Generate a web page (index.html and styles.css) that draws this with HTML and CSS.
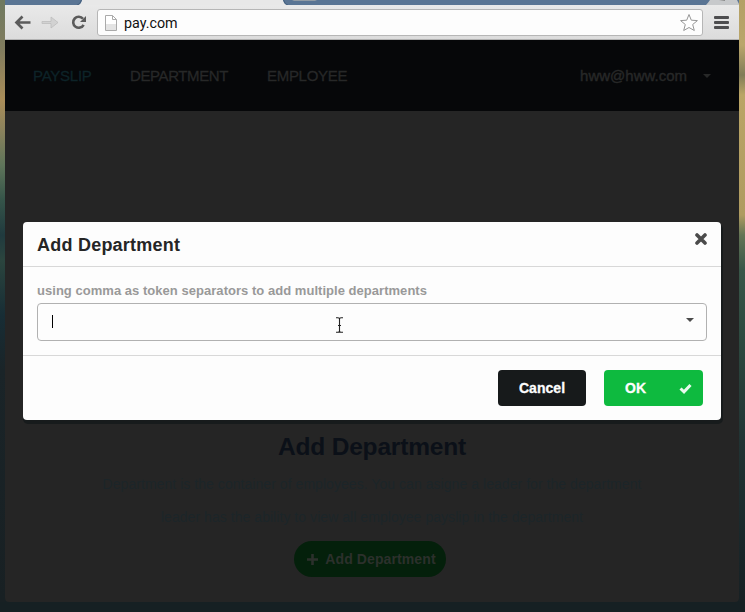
FILE: index.html
```html
<!DOCTYPE html>
<html lang="en">
<head>
<meta charset="utf-8">
<title>pay.com</title>
<link rel="stylesheet" href="styles.css">
</head>
<body>
<div class="window">
  <div class="tabs">
    <svg width="734" height="5" viewBox="0 0 734 5"><path d="M0 0H77Q76 5 72 5H0Z" fill="#5a7594"/><path d="M278 0Q279 5 283 5H734V0Z" fill="#5a7594"/><path d="M76.500 0Q75 5 72 5M278.500 0Q280 5 283 5" fill="none" stroke="#435f7e"/><path d="M287 0H312L310 1H289Z" fill="#919ba4"/><path d="M701 5C703 3 704 1 705 0H732L734 4V5Z" fill="#c7c9cb"/><path d="M714 0H720V1Z" fill="#888"/></svg>
  </div>
  <div class="toolbar">
    <svg class="nav-icons" width="92" height="34" viewBox="0 0 92 34">
      <path d="M11 17.500H25.500M17.500 11.500L11.500 17.500L17.500 23.500" fill="none" stroke="#5b5b5b" stroke-width="2.700"/>
      <path d="M37 16.500H46V12L53 17.500L46 23V18.500H37Z" fill="#d2d2d2" stroke="#bdbdbd" stroke-width=".8"/>
      <path d="M78 13.800A5.500 5.500 0 1 0 78.600 19.800" fill="none" stroke="#5b5b5b" stroke-width="2.600"/><path d="M81 11V17H75Z" fill="#5b5b5b"/>
    </svg>
    <div class="address">
      <svg width="12" height="16" viewBox="0 0 12 16"><path d="M.5.500H7.500L11.500 4.500V15.500H.5Z" fill="#fff" stroke="#aaa"/><path d="M1 9H11V15H1Z" fill="#e4e4e4"/><path d="M7.500.500V4.500H11.500" fill="none" stroke="#aaa"/></svg>
      <span class="url">pay.com</span>
      <svg width="20" height="20" viewBox="0 0 20 20"><path d="M10 1.500L12.300 7.200L18.400 7.600L13.700 11.500L15.300 17.500L10 14.500L4.700 17.500L6.300 11.500L1.600 7.600L7.700 7.200Z" fill="#fff" stroke="#969696" stroke-linejoin="round"/></svg>
    </div>
    <div class="burger"><i></i><i></i><i></i></div>
  </div>
  <div class="page">
    <nav class="menu">
      <span class="item active">PAYSLIP</span>
      <span class="item department">DEPARTMENT</span>
      <span class="item employee">EMPLOYEE</span>
      <span class="account">hww@hww.com</span>
      <i class="caret"></i>
    </nav>
    <section class="intro">
      <h1>Add Department</h1>
      <p class="line-one">Department is the container of employees. You can asigne a leader for the department</p>
      <p class="line-two">leader has the ability to view all employee payslip in the department</p>
      <div class="add"><svg width="11" height="11" viewBox="0 0 11 11"><path d="M5.500 0V11M0 5.500H11" stroke="#2c302c" stroke-width="2.600"/></svg><span>Add Department</span></div>
    </section>
  </div>
</div>
<div class="modal">
  <header class="modal-head">
    <h2>Add Department</h2>
    <svg width="12" height="12" viewBox="0 0 12 12"><path d="M2 2L10 10M10 2L2 10" stroke="#4b4b4b" stroke-width="3.600" stroke-linecap="round"/></svg>
  </header>
  <div class="modal-body">
    <label>using comma as token separators to add multiple departments</label>
    <div class="select"><i class="text-caret"></i>
      <svg class="pointer" width="9" height="16" viewBox="0 0 9 16"><path d="M1 .7H3Q4.500 .7 4.500 2V14Q4.500 15.300 3 15.300H1M8 .7H6Q4.500 .7 4.500 2M8 15.300H6Q4.500 15.300 4.500 14M3 8.500H6" fill="none" stroke="#222" stroke-width="1.100"/></svg>
      <i class="caret"></i></div>
  </div>
  <footer class="modal-foot">
    <div class="button cancel">Cancel</div>
    <div class="button ok"><span>OK</span><svg width="13" height="11" viewBox="0 0 13 11"><path d="M1.500 5.500L5 8.800L11.500 2" fill="none" stroke="#e8faed" stroke-width="3"/></svg></div>
  </footer>
</div>
</body>
</html>
```
FILE: styles.css
```css
* { box-sizing: border-box; }
body {
  margin: 0;
  width: 745px;
  height: 612px;
  overflow: hidden;
  position: relative;
  padding: 0 6px 0 5px;
  font-family: "Liberation Sans", Arial, sans-serif;
  background:
    linear-gradient(#6f795f 0, #817c5e 50px, #a98d59 100px, #8b825c 130px, #5f755a 165px, #355449 200px, #203a3e 235px, #2b453e 260px, #172d35 315px, #1a2428 370px, #182023 600px) 0 0 / 5px 602px no-repeat,
    linear-gradient(#b3a065 0, #baa66b 45px, #817c57 75px, #baa566 95px, #af9b60 215px, #637455 235px, #385648 270px, #2c493f 340px, #213333 440px, #192629 550px, #172023 602px) 100% 0 / 6px 602px no-repeat,
    #162023;
}
h1, h2, p { margin: 0; }
.window { height: 602px; overflow: hidden; border-radius: 0 0 4px 4px; background: #252525; }
.tabs { height: 5px; background: #e8e8e8; }
.tabs svg { display: block; }
.toolbar {
  height: 35px;
  display: flex;
  align-items: flex-start;
  background: linear-gradient(#e9e9e9, #dcdcdc);
  border-bottom: 1px solid #b2b2b2;
}
.nav-icons { flex: none; }
.address {
  width: 606px;
  height: 27px;
  margin-top: 4px;
  padding: 0 3px 0 7px;
  display: flex;
  align-items: center;
  background: #fdfdfd;
  border: 1px solid #b6b6b6;
  border-radius: 3px;
}
.url {
  flex: 1;
  margin-left: 7px;
  font: 14.300px Roboto, sans-serif;
  letter-spacing: 0;
  color: #111;
}
.burger { display: flex; flex-direction: column; gap: 2px; margin: 11px 0 0 11px; }
.burger i { width: 15px; height: 3px; border-radius: 1px; background: #4d4d4f; }
.menu {
  height: 71px;
  padding: 0 28px 0 28px;
  display: flex;
  align-items: center;
  font-size: 15px;
  letter-spacing: -.4px;
  color: #272828;
  background: #060709;
}
.active { width: 58px; letter-spacing: -.25px; color: #0d2328; }
.item { -webkit-text-stroke: .3px; }
.department { width: 98px; margin-left: 39px; }
.employee { margin-left: 39px; letter-spacing: -.3px; }
.account { margin-left: auto; letter-spacing: 0; -webkit-text-stroke: .4px; }
.caret { border: 4px solid transparent; border-top-color: currentColor; border-bottom: 0; }
.menu .caret { margin-left: 16px; }
.intro {
  padding-top: 320px;
  display: flex;
  flex-direction: column;
  align-items: center;
  color: #192329;
}
h1 { height: 37px; line-height: 32px; font-size: 24.500px; letter-spacing: -.17px; color: #0b1018; }
.intro p { height: 33px; line-height: 33px; font-size: 14px; letter-spacing: .05px; white-space: nowrap; color: #1c2529; }
.add {
  width: 152px;
  height: 36px;
  margin: 7px 4px 0 0;
  padding-left: 3px;
  display: flex;
  align-items: center;
  justify-content: center;
  gap: 7px;
  border-radius: 18px;
  background: #04200b;
  font-size: 14px;
  letter-spacing: .1px;
  font-weight: bold;
  color: #2c302c;
  white-space: nowrap;
}
.modal {
  position: absolute;
  left: 23px;
  top: 222px;
  width: 698px;
  height: 198px;
  border-radius: 4px;
  background: #fdfdfd;
  box-shadow: 1px 3px 0 1px #171b1c;
}
.modal-head {
  height: 45px;
  padding: 0 14px;
  display: flex;
  justify-content: space-between;
  border-bottom: 1px solid #d8d8d8;
}
h2 { font-size: 18px; line-height: 46px; letter-spacing: .23px; color: #252525; }
.modal-head svg { margin-top: 11px; }
.modal-body { height: 89px; padding: 14px 14px 0; border-bottom: 1px solid #d8d8d8; }
label { display: block; height: 22px; line-height: 19px; font-size: 13px; letter-spacing: .035px; font-weight: bold; color: #999; white-space: nowrap; }
.select {
  height: 38px;
  padding: 0 12px 0 14px;
  display: flex;
  align-items: center;
  border: 1px solid #b1b1b1;
  border-radius: 4px;
  color: #4b4b4b;
}
.text-caret { width: 1px; height: 13px; margin-top: -2px; background: #000; }
.pointer { margin: 6px 0 0 282px; }
.select .caret { margin: -4px 0 0 auto; }
.modal-foot { padding: 14px 18px; display: flex; justify-content: flex-end; gap: 18px; }
.button {
  height: 36px;
  border-radius: 4px;
  display: flex;
  align-items: center;
  justify-content: center;
  font-size: 14px;
  font-weight: bold;
  color: #fdfdfd;
  -webkit-text-stroke: .3px;
}
.cancel { width: 88px; background: #171a1b; letter-spacing: .05px; }
.ok { width: 99px; padding: 0 11px 0 21px; justify-content: space-between; background: #0eba3f; }
```
